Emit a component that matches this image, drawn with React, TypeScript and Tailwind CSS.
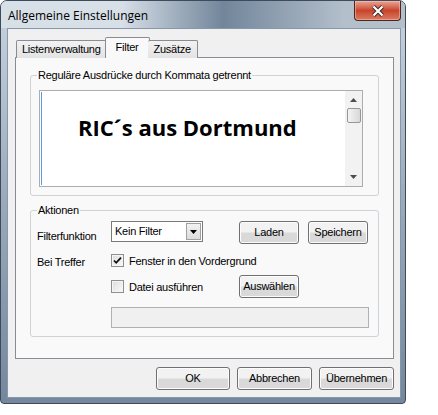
import type { ReactNode } from 'react'

const ui = "font-['Liberation_Sans',Arial,sans-serif] text-[11px] leading-[13px] tracking-[-0.25px] text-black"

function WinButton({ children, className = '' }: { children: ReactNode; className?: string }) {
  return (
    <div
      className={`flex items-center justify-center rounded-[3px] border border-[#707070] bg-linear-to-b from-[#f2f2f2] from-45% to-[#d9d9d9] to-55% shadow-[inset_0_0_0_1px_#fcfcfc] ${className}`}
    >
      {children}
    </div>
  )
}

function Checkbox({ checked }: { checked: boolean }) {
  return (
    <div className="flex h-[13px] w-[13px] shrink-0 items-center justify-center border border-[#8e8f8f] bg-linear-to-br from-[#dcdcdc] to-[#fbfbfb] shadow-[inset_0_0_0_1px_#f4f4f4]">
      {checked && (
        <svg width="9" height="9" viewBox="0 0 9 9">
          <path d="M1 4.5 L3.2 6.8 L8 1.6" fill="none" stroke="#111" strokeWidth="1.8" />
        </svg>
      )}
    </div>
  )
}

function Legend({ children }: { children: ReactNode }) {
  return <legend className="ml-[6px] px-[1px] leading-[13px]">{children}</legend>
}

export default function App() {
  return (
    <div className={`h-[415px] w-[438px] bg-white ${ui}`}>
      <div className="flex h-[404px] w-[406px] flex-col rounded-t-[7px] rounded-b-[4px] border border-[#3d4b5c] bg-linear-to-b from-[#c9d3de] via-[#9aaabb] to-[#74879d]">
        {/* title bar */}
        <div className="flex h-[27px] shrink-0 justify-between rounded-t-[6px] bg-linear-to-r from-[#d7dfe7] from-30% via-[#72869b] via-55% to-[#b3bfcb] to-85% pl-[7px] pr-[4px]">
          <span className="mt-[7px] font-['Open_Sans','Noto_Sans',sans-serif] text-[12px] leading-[15px] tracking-normal text-black">
            Allgemeine Einstellungen
          </span>
          <div className="flex h-[20px] w-[47px] items-center justify-center rounded-b-[4px] border border-t-0 border-[#4a2820] bg-linear-to-b from-[#e8a595] via-[#c8432c] to-[#d97a5e] shadow-[inset_0_0_0_1px_rgba(255,200,190,0.5)]">
            <svg width="14" height="12" viewBox="0 0 14 12">
              <path d="M2.5 1.5 L11.5 10.5 M11.5 1.5 L2.5 10.5" stroke="#3a2a28" strokeWidth="4" />
              <path d="M2.5 1.5 L11.5 10.5 M11.5 1.5 L2.5 10.5" stroke="#fff" strokeWidth="2.2" />
            </svg>
          </div>
        </div>

        {/* client area */}
        <div className="mb-[5px] ml-[6px] mr-[4px] flex flex-1 flex-col border border-[#8797aa] bg-[#f0f0f0] pl-[7px] pr-[6px] pt-[8px]">
          {/* tabs */}
          <div className="relative z-10 -mb-px flex h-[21px] items-end pl-[1px]">
            <div className="flex h-[18px] items-center rounded-t-[2px] border border-b-0 border-[#898c95] bg-linear-to-b from-[#f2f2f2] to-[#e3e3e3] px-[5px]">
              Listenverwaltung
            </div>
            <div className="-mx-[2px] flex h-[21px] items-start rounded-t-[2px] border border-b-0 border-[#898c95] bg-[#f9f9f9] px-[10px] pt-[3px]">
              Filter
            </div>
            <div className="flex h-[18px] items-center rounded-t-[2px] border border-b-0 border-l-0 border-[#898c95] bg-linear-to-b from-[#f2f2f2] to-[#e3e3e3] px-[6px]">
              Zusätze
            </div>
          </div>

          {/* tab panel */}
          <div className="flex h-[302px] flex-col border border-[#898c95] bg-[#f9f9f9] px-[14px]">
            <fieldset className="mt-[11px] rounded-[3px] border border-[#cdd3d8] pb-[8px]">
              <Legend>Reguläre Ausdrücke durch Kommata getrennt</Legend>
              <div className="ml-[8px] mt-[8px] flex h-[97px] w-[324px] border border-[#abadb3] bg-white">
                <div className="my-[1px] ml-[1px] w-[1px] bg-[#5a9ad8]" />
                <div className="flex-1 pl-[36px] pt-[21px] font-['Open_Sans','Noto_Sans',sans-serif] text-[22px] font-bold leading-[30px] tracking-normal">
                  RIC´s aus Dortmund
                </div>
                <div className="flex w-[17px] flex-col items-center bg-[#f2f2f2] pt-[7px] pb-[7px]">
                  <svg width="7" height="4" viewBox="0 0 7 4">
                    <path d="M0 4 L3.5 0 L7 4 Z" fill="#4d4d4d" />
                  </svg>
                  <div className="mt-[6px] h-[15px] w-[14px] rounded-[2px] border border-[#979797] bg-linear-to-r from-[#f3f3f3] to-[#d8d8d8]" />
                  <div className="flex-1" />
                  <svg width="7" height="4" viewBox="0 0 7 4">
                    <path d="M0 0 L3.5 4 L7 0 Z" fill="#4d4d4d" />
                  </svg>
                </div>
              </div>
            </fieldset>

            <fieldset className="mt-[8px] rounded-[3px] border border-[#cdd3d8] pb-[8px]">
              <Legend>Aktionen</Legend>
              <div className="pl-[6px]">
                <div className="mt-[4px] flex items-start">
                  <span className="w-[74px] pt-[9px]">Filterfunktion</span>
                  <div className="flex h-[21px] w-[92px] items-center border border-[#7a7a7a] bg-white pl-[3px]">
                    <span className="flex-1">Kein Filter</span>
                    <div className="mr-[1px] flex h-[17px] w-[15px] items-center justify-center border border-[#a0a0a0] bg-linear-to-b from-[#f2f2f2] to-[#dcdcdc]">
                      <svg width="7" height="4" viewBox="0 0 7 4">
                        <path d="M0 0 L3.5 4 L7 0 Z" fill="#000" />
                      </svg>
                    </div>
                  </div>
                  <WinButton className="ml-[36px] h-[23px] w-[60px]">Laden</WinButton>
                  <WinButton className="ml-[9px] h-[23px] w-[60px]">Speichern</WinButton>
                </div>

                <div className="mt-[10px] flex items-start">
                  <span className="w-[74px] pt-[2px]">Bei Treffer</span>
                  <Checkbox checked />
                  <span className="ml-[5px] pt-[1px]">Fenster in den Vordergrund</span>
                </div>

                <div className="mt-[6px] flex items-center">
                  <div className="w-[74px]" />
                  <Checkbox checked={false} />
                  <span className="ml-[5px] w-[110px] pt-[1px]">Datei ausführen</span>
                  <WinButton className="h-[23px] w-[60px]">Auswählen</WinButton>
                </div>

                <div className="mt-[9px] flex">
                  <div className="w-[74px]" />
                  <div className="h-[21px] w-[258px] border border-[#adb2b5] bg-[#f0f0f0]" />
                </div>
              </div>
            </fieldset>
          </div>

          {/* dialog buttons */}
          <div className="mt-[8px] flex justify-end gap-[7px]">
            <WinButton className="h-[23px] w-[74px] border-[#3c7fb1] shadow-[inset_0_0_0_1px_#b8d6fb]">OK</WinButton>
            <WinButton className="h-[23px] w-[75px]">Abbrechen</WinButton>
            <WinButton className="h-[23px] w-[75px]">Übernehmen</WinButton>
          </div>
        </div>
      </div>
    </div>
  )
}
